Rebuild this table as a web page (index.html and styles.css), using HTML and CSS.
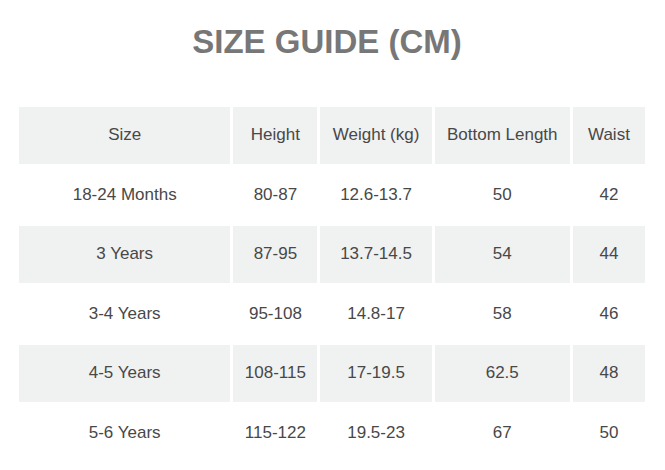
FILE: index.html
```html
<!DOCTYPE html>
<html>
<head>
<meta charset="utf-8">
<link rel="stylesheet" href="styles.css">
</head>
<body>
<div class="page">
  <h1 class="title">SIZE GUIDE (CM)</h1>
  <table class="guide">
    <colgroup>
      <col class="c1"><col class="c2"><col class="c3"><col class="c4"><col class="c5">
    </colgroup>
    <tr class="shade"><td>Size</td><td>Height</td><td>Weight (kg)</td><td>Bottom Length</td><td>Waist</td></tr>
    <tr><td>18-24 Months</td><td>80-87</td><td>12.6-13.7</td><td>50</td><td>42</td></tr>
    <tr class="shade"><td>3 Years</td><td>87-95</td><td>13.7-14.5</td><td>54</td><td>44</td></tr>
    <tr><td>3-4 Years</td><td>95-108</td><td>14.8-17</td><td>58</td><td>46</td></tr>
    <tr class="shade"><td>4-5 Years</td><td>108-115</td><td>17-19.5</td><td>62.5</td><td>48</td></tr>
    <tr><td>5-6 Years</td><td>115-122</td><td>19.5-23</td><td>67</td><td>50</td></tr>
  </table>
</div>
</body>
</html>
```
FILE: styles.css
```css
html, body { margin: 0; padding: 0; background: #fff; }
body { font-family: "Liberation Sans", Arial, sans-serif; }
.page { padding: 23px 0 0 16px; width: 632px; }
.title {
  margin: 0 0 43px 0;
  padding-right: 10px;
  text-align: center;
  font-size: 33px;
  font-weight: bold;
  color: #777;
  line-height: 38px;
}
.guide {
  border-collapse: separate;
  border-spacing: 3px;
  table-layout: fixed;
  width: 632px;
}
.c1 { width: 211px; }
.c2 { width: 84px; }
.c3 { width: 111px; }
.c4 { width: 135px; }
.c5 { width: 72px; }
.guide td {
  height: 56.5px;
  padding: 0;
  text-align: center;
  vertical-align: middle;
  font-size: 17px;
  color: #484848;
}
.shade td { background: #f0f1f1; }
```
